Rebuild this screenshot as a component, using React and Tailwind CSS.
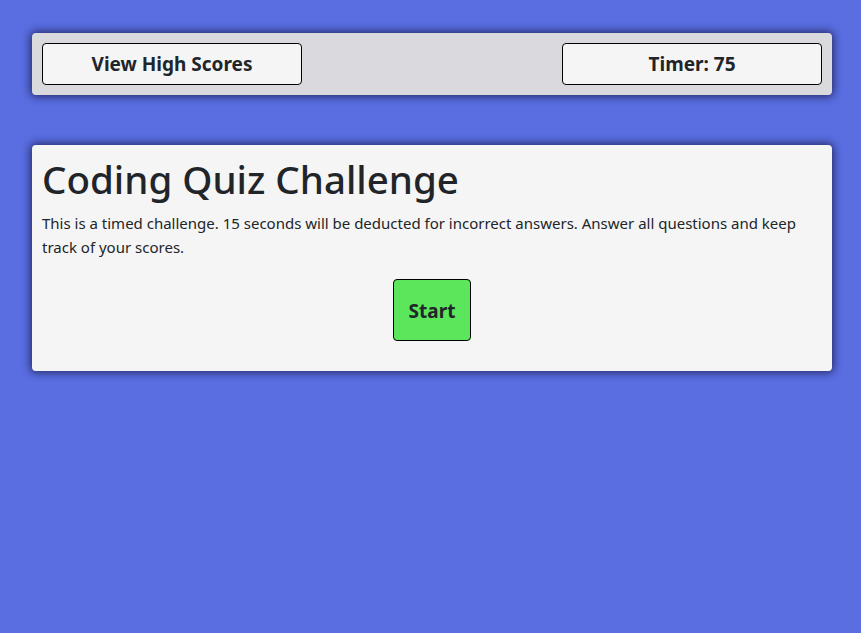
import React from "react";

export default function App() {
  return (
    <div className="min-h-screen bg-[#5a6ee2] pl-8 pr-[29px] pt-[33px] text-[#212529] font-['Noto_Sans',sans-serif]">
      <header className="flex items-center justify-between rounded bg-[#dadade] p-[10px] shadow-[0_0_8px_2px_rgba(20,20,60,0.7)]">
        <button className="h-[42px] w-[260px] rounded border border-black bg-[#f5f5f5] text-[19px] font-bold">
          View High Scores
        </button>
        <button className="h-[42px] w-[260px] rounded border border-black bg-[#f5f5f5] text-[19px] font-bold">
          Timer: 75
        </button>
      </header>

      <main className="mt-[50px] rounded bg-[#f5f5f5] p-[10px] pb-[30px] shadow-[0_0_8px_2px_rgba(20,20,60,0.7)]">
        <h1 className="text-[38.5px] leading-[48px] font-medium">Coding Quiz Challenge</h1>
        <p className="mt-2 text-[15px] leading-6">
          This is a timed challenge. 15 seconds will be deducted for incorrect answers. Answer all questions and keep
          track of your scores.
        </p>
        <div className="mt-5 flex justify-center">
          <button className="h-[62px] w-[78px] rounded border border-black bg-[#5ce65c] pt-[3px] text-[19px] font-bold">
            Start
          </button>
        </div>
      </main>
    </div>
  );
}
